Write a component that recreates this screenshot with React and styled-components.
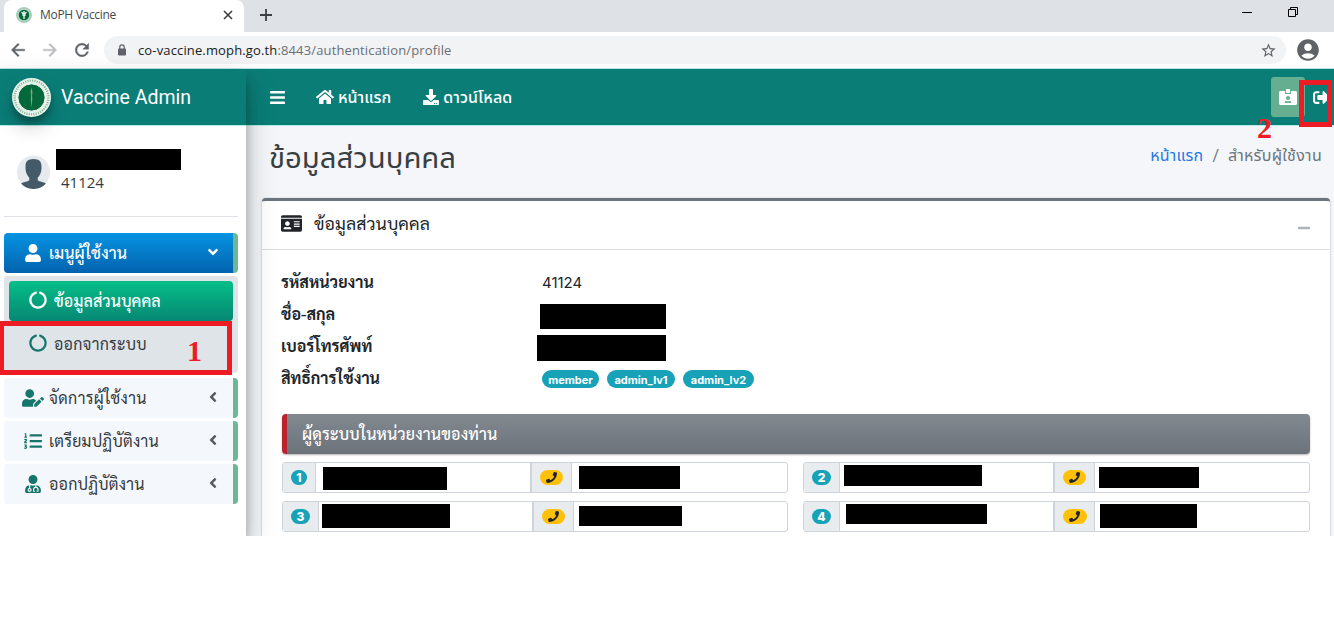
import React from "react";
import styled, { createGlobalStyle } from "styled-components";
import {
  FaBars, FaHome, FaDownload, FaIdCardAlt, FaSignOutAlt, FaUser, FaUserEdit,
  FaListOl, FaUserMd, FaAngleDown, FaAngleLeft, FaCircleNotch, FaIdCard, FaPhone, FaMinus,
} from "react-icons/fa";
import { MdArrowBack, MdArrowForward, MdRefresh, MdStarBorder, MdAccountCircle } from "react-icons/md";

const loopedThai = 'Sarabun, "Noto Sans Thai Looped", Loma, Garuda, Waree, "Open Sans", "Noto Sans", sans-serif';
const wideSans = 'Inter, "Open Sans", sans-serif';

const GlobalStyle = createGlobalStyle`
  * { box-sizing: border-box; }
  body {
    margin: 0;
    background: #fff;
    color: #212529;
    font-family: Roboto, "Noto Sans Thai", "Noto Sans", sans-serif;
    font-size: 16px;
    overflow: hidden;
  }
  svg { display: block; flex: none; }
`;

const Window = styled.div`
  position: relative;
  width: 1334px;
  height: 536px;
  overflow: hidden;
  display: flex;
  flex-direction: column;
`;

const Text = styled.span`
  display: block;
  white-space: nowrap;
  line-height: ${(p) => p.$lh || "24px"};
  font-size: ${(p) => p.$size || 16}px;
  font-weight: ${(p) => p.$weight || 400};
  letter-spacing: ${(p) => p.$track || 0}px;
  color: ${(p) => p.$color || "inherit"};
  ${(p) => p.$font && `font-family: ${p.$font};`}
`;

/* Browser chrome */
const TabStrip = styled.div`
  height: 32px;
  flex: none;
  background: #dee1e6;
  display: flex;
  padding-left: 4px;
`;
const Tab = styled.div`
  width: 240px;
  background: #fff;
  border-radius: 8px 8px 0 0;
  display: flex;
  align-items: center;
  padding: 0 11px 2px 12px;
  font-family: "Open Sans", sans-serif;
`;
const TabTitle = styled(Text)`
  flex: 1;
  margin-left: 8px;
`;
const NewTab = styled.div`
  margin: 9px 0 0 16px;
`;
const WindowButtons = styled.div`
  margin-left: auto;
  display: flex;
  gap: 35px;
  padding: 6px 35px 0 0;
`;
const Toolbar = styled.div`
  height: 37px;
  flex: none;
  background: #fff;
  border-bottom: 1px solid #b9e3e3;
  display: flex;
  align-items: center;
  padding: 0 13px 0 8px;
  color: #5f6368;
`;
const NavButtons = styled.div`
  display: flex;
  gap: 12px;
  width: 96px;
  path:last-child { stroke: currentColor; stroke-width: 0.5px; }
  svg:nth-child(2) { color: #bcbec1; }
`;
const AddressBar = styled.div`
  width: 1182px;
  height: 28px;
  border-radius: 14px;
  background: #f1f3f4;
  display: flex;
  align-items: center;
  padding: 0 9px 0 14px;
  margin-right: 9px;
`;
const Url = styled(Text)`
  flex: 1;
  margin-left: 12px;
  b { font-weight: 400; color: #202124; }
`;

/* Application */
const AppBody = styled.div`
  flex: 1;
  display: flex;
  min-height: 0;
`;
const Sidebar = styled.aside`
  width: 246px;
  flex: none;
  background: #fff;
  position: relative;
  z-index: 2;
  box-shadow: 0 14px 28px rgba(0,0,0,.25), 0 10px 10px rgba(0,0,0,.22);
`;
const Brand = styled.div`
  height: 57px;
  background: #0b7d77;
  border-bottom: 1px solid #b3ecea;
  display: flex;
  align-items: center;
  padding-left: 12px;
  gap: 10px;
  color: #fff;
  ${Text} { padding-top: 2px; }
`;
const BrandLogo = styled.div`
  width: 39px;
  height: 39px;
  border-radius: 50%;
  box-shadow: 0 10px 20px rgba(0,0,0,.19), 0 6px 6px rgba(0,0,0,.23);
`;
const UserPanel = styled.div`
  height: 91px;
  margin: 0 8px 16px 4px;
  border-bottom: 1px solid #dee2e6;
  display: flex;
  padding: 23px 0 0 13px;
`;
const Avatar = styled.div`
  margin: 6px 6px 0 0;
  width: 33px;
`;
const UserId = styled(Text)`
  margin: 0 0 0 5px;
`;
const Redacted = styled.div`
  background: #000;
  width: ${(p) => p.$w}px;
  height: ${(p) => p.$h}px;
  margin: ${(p) => p.$m || 0};
  flex: none;
`;
const Menu = styled.nav`
  display: flex;
  flex-direction: column;
  width: 234px;
  margin-left: 4px;
`;
const MenuItem = styled.div`
  height: 40px;
  margin-bottom: 3px;
  border-radius: 4px;
  border-right: 5px solid #6bb897;
  background: ${(p) => (p.$open ? "linear-gradient(#0594e2, #0362ae)" : "#f4f7fc")};
  color: ${(p) => (p.$open ? "#fff" : "#343a40")};
  display: flex;
  align-items: center;
  padding: 0 12px 0 18px;
  > svg { margin-bottom: 2px; color: ${(p) => (p.$open ? "#fff" : "#555a5f")}; }
`;
const MenuIcon = styled.span`
  width: 22px;
  margin-right: 5px;
  display: flex;
  justify-content: center;
  color: ${(p) => (p.$open ? "#fff" : "#17766b")};
`;
const MenuText = styled(Text)`
  flex: 1;
`;
const SubMenu = styled.div`
  height: 97px;
  margin-bottom: 5px;
  border-radius: 4px;
  background: #dfe4e9;
  padding: 5px 5px 0;
`;
const SubItem = styled.div`
  height: 40px;
  margin-bottom: 3px;
  border-radius: 4px;
  display: flex;
  align-items: center;
  gap: 7px;
  padding-left: 20px;
  color: ${(p) => (p.$active ? "#fff" : "#343a40")};
  ${(p) => p.$active && "background: linear-gradient(#05bf87, #078774);"}
  svg { color: ${(p) => (p.$active ? "#fff" : "#17766b")}; margin-bottom: 2px; }
`;
const Main = styled.main`
  flex: 1;
  min-width: 0;
  background: #f4f6f9;
`;
const Navbar = styled.div`
  height: 57px;
  background: #0b7d77;
  border-bottom: 1px solid #b3ecea;
  color: #fff;
  display: flex;
  align-items: center;
  padding-left: 23px;
`;
const NavLink = styled.div`
  display: flex;
  align-items: center;
  gap: 4px;
  margin-left: ${(p) => p.$gap}px;
  ${Text} { padding-top: 2px; }
`;
const NavActions = styled.div`
  margin-left: auto;
  padding-right: 4px;
  display: flex;
  align-items: center;
`;
const BadgeButton = styled.div`
  width: 34px;
  height: 40px;
  border-radius: 3px;
  background: #65ae90;
  display: flex;
  align-items: center;
  justify-content: center;
  margin-right: 8px;
`;
const PageHead = styled.div`
  height: 72px;
  display: flex;
  justify-content: space-between;
  padding: 14px 12px 0 23px;
`;
const Crumbs = styled.div`
  display: flex;
  gap: 9px;
  padding-top: 4px;
  color: #6c757d;
`;
const Card = styled.section`
  height: 400px;
  width: 1068px;
  margin-left: 16px;
  background: #fff;
  border-top: 3px solid #6c757d;
  border-radius: 4px;
  box-shadow: 0 0 1px rgba(0,0,0,.25), 0 1px 3px rgba(0,0,0,.2);
`;
const CardHead = styled.div`
  height: 49px;
  border-bottom: 1px solid #dcdddf;
  display: flex;
  align-items: center;
  padding: 0 19px 3px 19px;
  gap: 12px;
  ${Text} { margin-top: -1px; }
  svg:last-child { color: #adb5bd; margin: 8px 0 0 auto; }
`;
const CardBody = styled.div`
  padding: 17px 20px 0;
`;
const Field = styled.div`
  height: 32px;
  display: flex;
  align-items: center;
`;
const FieldName = styled(Text)`
  width: 261px;
  flex: none;
  margin: -2px 0 0 -1px;
`;
const Pill = styled.span`
  height: 18px;
  width: ${(p) => p.$w}px;
  border-radius: 9px;
  background: #17a2b8;
  display: flex;
  align-items: center;
  justify-content: center;
  padding-top: 2px;
  margin-right: 8px;
`;
const Callout = styled.div`
  height: 40px;
  margin: 19px 0 8px;
  border-left: 5px solid #b8232f;
  border-radius: 4px;
  background: linear-gradient(#82898f, #6b727a);
  box-shadow: 0 1px 2px rgba(0,0,0,.3);
  color: #fff;
  display: flex;
  align-items: center;
  padding-left: 15px;
`;
const AdminGrid = styled.div`
  display: grid;
  grid-template-columns: 506px 507px;
  column-gap: 15px;
  row-gap: 8px;
`;
const InputGroup = styled.div`
  height: 31px;
  border: 1px solid #ced4da;
  border-radius: 3px;
  display: flex;
  overflow: hidden;
`;
const Addon = styled.div`
  width: ${(p) => p.$w}px;
  flex: none;
  background: #e9ecef;
  border-right: 1px solid #ced4da;
  border-left: ${(p) => (p.$phone ? "2px solid #ced4da" : "0")};
  display: flex;
  align-items: center;
  justify-content: center;
`;
const Value = styled.div`
  width: ${(p) => p.$w}px;
  flex: none;
`;
const Chip = styled.span`
  width: ${(p) => p.$w}px;
  height: 15px;
  border-radius: 8px;
  background: ${(p) => (p.$phone ? "#ffc107" : "#17a2b8")};
  color: ${(p) => (p.$phone ? "#212529" : "#fff")};
  display: flex;
  align-items: center;
  justify-content: center;
`;

/* Instruction marks drawn over the page */
const MarkBox = styled.div`
  position: absolute;
  z-index: 5;
  left: ${(p) => p.$x}px;
  top: ${(p) => p.$y}px;
  width: ${(p) => p.$w}px;
  height: ${(p) => p.$h}px;
  border: 5px solid #ed1c24;
`;
const MarkNumber = styled.div`
  position: absolute;
  z-index: 6;
  left: ${(p) => p.$x}px;
  top: ${(p) => p.$y}px;
  color: #ed1c24;
  font: bold 30px/30px "Liberation Serif", serif;
`;

const Seal = ({ size, small }) => (
  <svg width={size} height={size} viewBox="0 0 40 40">
    <circle cx="20" cy="20" r="20" fill={small ? "#b9d8c7" : "#e9f3ea"} />
    <circle cx="20" cy="20" r="17.300" fill="none" stroke="#3d8a60" strokeWidth="2.200" strokeDasharray="1.1 1.3" opacity=".6" />
    <circle cx="20" cy="20" r="14" fill="#04693a" stroke="#fff" strokeWidth="1" />
    {small ? (
      <path d="M20 10v20M14 13q6 8 12 0M16 19l4 4 4-4" fill="none" stroke="#fff" strokeWidth="3" />
    ) : (
      <path d="M20 9.500l1 5-.4 3 .2 4-.8 9-.8-9 .4-4-.6-3z" fill="#7da878" />
    )}
  </svg>
);

const Silhouette = () => (
  <svg width="33" height="34" viewBox="0 0 33 34">
    <circle cx="16.500" cy="17" r="16.500" fill="#e6eaee" />
    <path d="M16.500 4c6 0 8.300 3.200 7.900 7.600.5 4.400-1 8.400-3.700 11.100v2.300c1.500 2 6 1.700 8.300 3.600A16.500 16.500 0 0 1 16.500 34 16.500 16.500 0 0 1 4 28.600c2.300-1.900 6.900-1.600 8.300-3.600v-2.300C9.600 20 8.100 16 8.600 11.600 8.200 7.200 10.500 4 16.500 4z" fill="#455a68" />
  </svg>
);

const Padlock = () => (
  <svg width="8" height="12" viewBox="0 0 8 12">
    <rect y="4.500" width="8" height="7" rx="1" fill="#5f6368" />
    <path d="M1.800 5V3a2.200 2.200 0 0 1 4.400 0v2" fill="none" stroke="#5f6368" strokeWidth="1.200" />
  </svg>
);

const menu = [
  { icon: FaUserEdit, text: "จัดการผู้ใช้งาน", size: 22, track: 0.35 },
  { icon: FaListOl, text: "เตรียมปฏิบัติงาน", size: 18, track: 0.25 },
  { icon: FaUserMd, text: "ออกปฏิบัติงาน", size: 18, track: 0.2 },
];

const admins = [
  { n: 1, a: 33, v: 214, p: 42, chip: 16, phone: 23, name: [124, 23, "4px 0 0 7px"], tel: [101, 23, "3px 0 0 7px"] },
  { n: 2, a: 36, v: 213, p: 42, chip: 19, phone: 23, name: [138, 21, "2px 0 0 4px"], tel: [100, 21, "4px 0 0 4px"] },
  { n: 3, a: 36, v: 213, p: 42, chip: 19, phone: 23, name: [128, 24, "2px 0 0 3px"], tel: [103, 20, "4px 0 0 5px"] },
  { n: 4, a: 36, v: 213, p: 42, chip: 19, phone: 24, name: [141, 20, "2px 0 0 6px"], tel: [97, 24, "2px 0 0 5px"] },
];

const roles = [
  { name: "member", w: 57 },
  { name: "admin_lv1", w: 68 },
  { name: "admin_lv2", w: 71 },
];

export default function App() {
  return (
    <>
      <GlobalStyle />
      <Window>
        <TabStrip>
          <Tab>
            <Seal size={16} small />
            <TabTitle $size={12} $track={-0.3} $color="#45484c">MoPH Vaccine</TabTitle>
            <svg width="10" height="10" viewBox="0 0 10 10"><path d="M1 1l8 8M9 1l-8 8" stroke="#3c4043" strokeWidth="1.600" /></svg>
          </Tab>
          <NewTab>
            <svg width="12" height="12" viewBox="0 0 12 12"><path d="M6 0v12M0 6h12" stroke="#3c4043" strokeWidth="1.800" /></svg>
          </NewTab>
          <WindowButtons>
            <svg width="10" height="12" viewBox="0 0 10 12"><path d="M0 6.500h10" stroke="#000" /></svg>
            <svg width="12" height="12" viewBox="0 0 12 12"><path d="M1.500 3.500h7v7h-7zM3.500 3.500v-2h7v7h-2" fill="none" stroke="#000" /></svg>
          </WindowButtons>
        </TabStrip>
        <Toolbar>
          <NavButtons>
            <MdArrowBack size={20} />
            <MdArrowForward size={20} />
            <MdRefresh size={20} />
          </NavButtons>
          <AddressBar>
            <Padlock />
            <Url $size={13} $track={0.14} $color="#6b6f74" $font='"Open Sans", sans-serif'><b>co-vaccine.moph.go.th</b>:8443/authentication/profile</Url>
            <MdStarBorder size={17} />
          </AddressBar>
          <MdAccountCircle size={26} />
        </Toolbar>

        <AppBody>
          <Sidebar>
            <Brand>
              <BrandLogo><Seal size={39} /></BrandLogo>
              <Text $size={19.5} $lh="28px">Vaccine Admin</Text>
            </Brand>
            <UserPanel>
              <Avatar><Silhouette /></Avatar>
              <div>
                <Redacted $w={125} $h={21} />
                <UserId $size={15} $lh="25px" $color="#343a40" $font='"Open Sans", sans-serif'>41124</UserId>
              </div>
            </UserPanel>
            <Menu>
              <MenuItem $open>
                <MenuIcon $open><FaUser size={18} /></MenuIcon>
                <MenuText $font={loopedThai} $weight={500} $track={0.1}>เมนูผู้ใช้งาน</MenuText>
                <FaAngleDown size={16} />
              </MenuItem>
              <SubMenu>
                <SubItem $active><FaCircleNotch size={18} /><Text $font={loopedThai} $weight={500} $track={0.1}>ข้อมูลส่วนบุคคล</Text></SubItem>
                <SubItem><FaCircleNotch size={18} /><Text $font={loopedThai} $track={0.2}>ออกจากระบบ</Text></SubItem>
              </SubMenu>
              {menu.map(({ icon: Icon, text, size, track }) => (
                <MenuItem key={text}>
                  <MenuIcon><Icon size={size} /></MenuIcon>
                  <MenuText $font={loopedThai} $track={track}>{text}</MenuText>
                  <FaAngleLeft size={16} />
                </MenuItem>
              ))}
            </Menu>
          </Sidebar>

          <Main>
            <Navbar>
              <FaBars size={17} />
              <NavLink $gap={30}><FaHome size={18} /><Text $weight={500}>หน้าแรก</Text></NavLink>
              <NavLink $gap={32}><FaDownload size={16} /><Text $weight={500} $track={0.1}>ดาวน์โหลด</Text></NavLink>
              <NavActions>
                <BadgeButton><FaIdCardAlt size={18} /></BadgeButton>
                <FaSignOutAlt size={17} />
              </NavActions>
            </Navbar>
            <PageHead>
              <Text $size={29.3} $lh="36px" $color="#3a3f44">ข้อมูลส่วนบุคคล</Text>
              <Crumbs>
                <Text $track={0.2} $color="#2478e6">หน้าแรก</Text>
                <Text>/</Text>
                <Text $track={0.3}>สำหรับผู้ใช้งาน</Text>
              </Crumbs>
            </PageHead>
            <Card>
              <CardHead>
                <FaIdCard size={21} />
                <Text $size={17.6} $track={0.1} $font={loopedThai}>ข้อมูลส่วนบุคคล</Text>
                <FaMinus size={14} />
              </CardHead>
              <CardBody>
                <Field><FieldName $weight={700} $font={loopedThai}>รหัสหน่วยงาน</FieldName><Text $size={15} $font={wideSans}>41124</Text></Field>
                <Field><FieldName $weight={700} $font={loopedThai}>ชื่อ-สกุล</FieldName><Redacted $w={126} $h={25} $m="3px 0 0 -2px" /></Field>
                <Field><FieldName $weight={700} $font={loopedThai}>เบอร์โทรศัพท์</FieldName><Redacted $w={129} $h={26} $m="1px 0 0 -5px" /></Field>
                <Field>
                  <FieldName $weight={700} $font={loopedThai}>สิทธิ์การใช้งาน</FieldName>
                  {roles.map((r) => (
                    <Pill key={r.name} $w={r.w}>
                      <Text $size={11} $weight={700} $lh="16px" $color="#fff" $font={wideSans}>{r.name}</Text>
                    </Pill>
                  ))}
                </Field>
                <Callout><Text $font={loopedThai} $weight={500} $track={0.15}>ผู้ดูระบบในหน่วยงานของท่าน</Text></Callout>
                <AdminGrid>
                  {admins.map((r) => (
                    <InputGroup key={r.n}>
                      <Addon $w={r.a}><Chip $w={r.chip}><Text $size={12} $weight={800} $lh="16px" $font={wideSans}>{r.n}</Text></Chip></Addon>
                      <Value $w={r.v}><Redacted $w={r.name[0]} $h={r.name[1]} $m={r.name[2]} /></Value>
                      <Addon $w={r.p} $phone><Chip $w={r.phone} $phone><FaPhone size={11} /></Chip></Addon>
                      <Redacted $w={r.tel[0]} $h={r.tel[1]} $m={r.tel[2]} />
                    </InputGroup>
                  ))}
                </AdminGrid>
              </CardBody>
            </Card>
          </Main>
        </AppBody>

        <MarkBox $x={-1} $y={321} $w={233} $h={54} />
        <MarkNumber $x={187} $y={336}>1</MarkNumber>
        <MarkBox $x={1299} $y={80} $w={33} $h={47} />
        <MarkNumber $x={1257} $y={113}>2</MarkNumber>
      </Window>
    </>
  );
}
